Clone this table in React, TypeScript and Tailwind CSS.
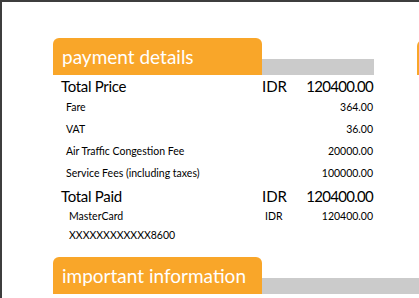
import React from "react";

const font = { fontFamily: 'Lato, "Noto Sans", Arial, sans-serif' };

function SectionTab({ title, wide }: { title: string; wide?: boolean }) {
    return (
        <div className="flex items-end">
            <div className="w-[209px] h-[37px] bg-[#f9a629] rounded-t-[6px] pl-[9px] text-white text-[19px] leading-[37px] whitespace-nowrap">
                {title}
            </div>
            <div className={`h-[16px] bg-[#cbcbcb] ${wide ? "flex-1" : "w-[112px]"}`} />
        </div>
    );
}

const fees = [
    { label: "Fare", amount: "364.00" },
    { label: "VAT", amount: "36.00" },
    { label: "Air Traffic Congestion Fee", amount: "20000.00" },
    { label: "Service Fees (including taxes)", amount: "100000.00" },
];

export default function App() {
    return (
        <div
            className="w-[419px] h-[298px] overflow-hidden bg-white border-t-2 border-l-2 border-[#3d3d3d] text-black"
            style={font}
        >
            <div className="flex pt-[36px]">
                <div className="w-[372px] pl-[51px] shrink-0">
                    <SectionTab title="payment details" />

                    <div className="flex items-center h-[22px] pl-[8px] pr-[1px] text-[15px]">
                        <span className="w-[201px] tracking-[-0.3px]">Total Price</span>
                        <span className="flex-1">IDR</span>
                        <span className="text-right tracking-[-0.7px]">120400.00</span>
                    </div>

                    {fees.map((f) => (
                        <div key={f.label} className="flex items-center h-[22px] pl-[13px] pr-[1px] text-[10.5px]">
                            <span className="flex-1">{f.label}</span>
                            <span className="text-right">{f.amount}</span>
                        </div>
                    ))}

                    <div className="flex items-center h-[22px] pl-[8px] pr-[1px] text-[15px]">
                        <span className="w-[201px] tracking-[-0.3px]">Total Paid</span>
                        <span className="flex-1">IDR</span>
                        <span className="text-right tracking-[-0.7px]">120400.00</span>
                    </div>

                    <div className="flex items-center h-[19px] pl-[16px] pr-[1px] text-[10.5px]">
                        <span className="w-[196px]">MasterCard</span>
                        <span className="flex-1">IDR</span>
                        <span className="text-right">120400.00</span>
                    </div>
                    <div className="flex items-center h-[20px] pl-[16px] text-[10.5px]">
                        XXXXXXXXXXXX8600
                    </div>
                </div>
                <div className="ml-[43px] mt-[2px] w-[20px] h-[35px] bg-[#f9a629] rounded-tl-[6px] shrink-0" />
            </div>

            <div className="pl-[51px] mt-[11px]">
                <SectionTab title="important information" wide />
            </div>
        </div>
    );
}
